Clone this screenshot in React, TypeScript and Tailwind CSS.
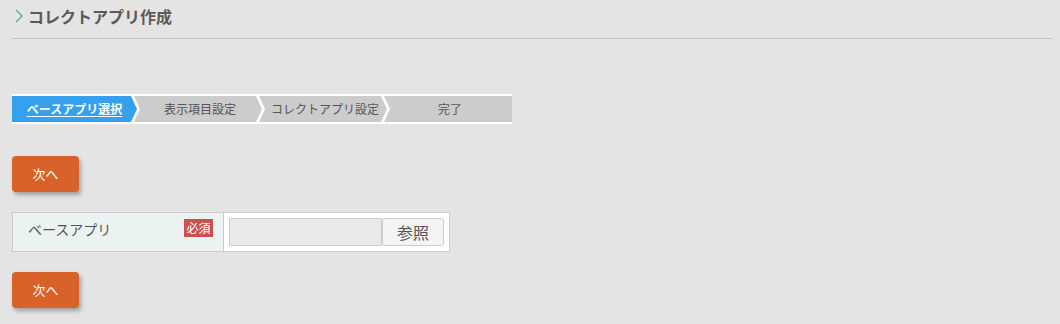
import React from "react";

const font = { fontFamily: '"Noto Sans CJK JP", "Noto Sans", sans-serif' };

function NextButton() {
  return (
    <button className="w-[67px] h-[36px] rounded-[4px] bg-[#d9612a] text-white text-[13px] shadow-[2px_3px_4px_rgba(0,0,0,0.3)] flex items-center justify-center">
      次へ
    </button>
  );
}

export default function App() {
  return (
    <div className="w-[1060px] h-[324px] bg-[#e4e4e4] pl-[12px] pr-[8px] text-[#555]" style={font}>
      <div className="h-[39px] border-b border-[#c4c4c4] flex items-start pt-[5px]">
        <svg width="14" height="22" viewBox="0 0 14 22" className="mr-[2px]">
          <polyline points="4,5 10,11 4,17" fill="none" stroke="#4fb0a8" strokeWidth="1.4" />
        </svg>
        <span className="text-[16px] font-bold leading-[22px] text-[#5a5a5a]">コレクトアプリ作成</span>
      </div>

      <div className="mt-[55px] w-[500px] h-[30px] bg-white py-[2px] flex">
        <div
          className="w-[125px] h-full bg-[#35a0ee] text-white text-[12px] font-semibold underline underline-offset-2 flex items-center justify-center"
          style={{ clipPath: "polygon(0 0, calc(100% - 6px) 0, 100% 50%, calc(100% - 6px) 100%, 0 100%)" }}
        >
          ベースアプリ選択
        </div>
        <div
          className="w-[128px] ml-[-3px] h-full bg-[#cccccc] text-[12px] text-[#555] flex items-center justify-center pl-[4px]"
          style={{ clipPath: "polygon(0 0, calc(100% - 6px) 0, 100% 50%, calc(100% - 6px) 100%, 0 100%, 6px 50%)" }}
        >
          表示項目設定
        </div>
        <div
          className="w-[128px] ml-[-3px] h-full bg-[#cccccc] text-[12px] text-[#555] flex items-center justify-center pl-[4px]"
          style={{ clipPath: "polygon(0 0, calc(100% - 6px) 0, 100% 50%, calc(100% - 6px) 100%, 0 100%, 6px 50%)" }}
        >
          コレクトアプリ設定
        </div>
        <div
          className="w-[128px] ml-[-3px] h-full bg-[#cccccc] text-[12px] text-[#555] flex items-center justify-center pl-[4px]"
          style={{ clipPath: "polygon(0 0, 100% 0, 100% 100%, 0 100%, 6px 50%)" }}
        >
          完了
        </div>
      </div>

      <div className="mt-[32px]">
        <NextButton />
      </div>

      <div className="mt-[20px] w-[438px] h-[40px] border border-[#cccccc] flex">
        <div className="w-[211px] h-full bg-[#eaf3f2] border-r border-[#cccccc] flex items-start justify-between pl-[15px] pr-[10px] pt-[5px]">
          <span className="text-[14px] leading-[22px] text-[#555]">ベースアプリ</span>
          <span className="mt-[1px] w-[29px] h-[18px] bg-[#cc5050] text-white text-[12px] leading-[18px] flex items-center justify-center">必須</span>
        </div>
        <div className="flex-1 bg-white flex items-start pl-[5px] pt-[5px]">
          <div className="w-[153px] h-[28px] bg-[#e9e9e9] border border-[#cccccc]" />
          <button className="w-[62px] h-[28px] rounded-[3px] border border-[#cccccc] bg-[#f4f4f4] text-[16px] text-[#555] flex items-center justify-center">
            参照
          </button>
        </div>
      </div>

      <div className="mt-[20px]">
        <NextButton />
      </div>
    </div>
  );
}
